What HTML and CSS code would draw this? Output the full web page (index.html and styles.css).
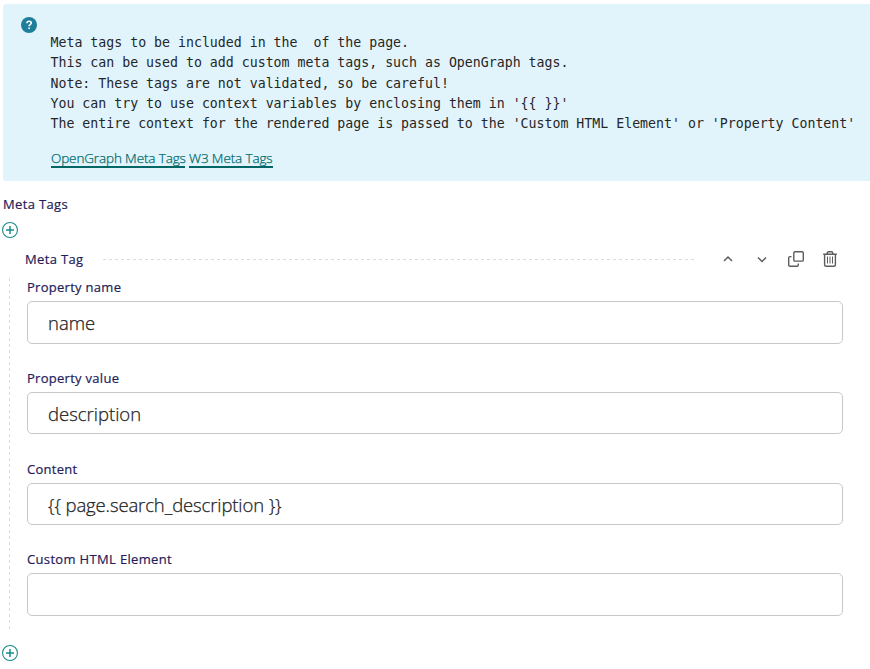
FILE: index.html
```html
<!DOCTYPE html>
<html lang="en">
<head>
<meta charset="utf-8">
<title>Meta Tags</title>
<link rel="stylesheet" href="styles.css">
</head>
<body>
<section class="help">
  <svg class="help-icon" width="16" height="16" viewBox="0 0 16 16"><circle cx="8" cy="8" r="8" fill="#1f7e9a"/><path d="M5.9 6.3C5.9 4.9 6.8 4.2 8.1 4.2S10.3 5 10.3 6.1C10.3 7.6 8.1 7.6 8.1 9.2M8.1 10.5V12" fill="none" stroke="#fff" stroke-width="1.6"/></svg>
  <div class="help-body">
    <pre class="help-text">Meta tags to be included in the  of the page.
This can be used to add custom meta tags, such as OpenGraph tags.
Note: These tags are not validated, so be careful!
You can try to use context variables by enclosing them in '{{ }}'
The entire context for the rendered page is passed to the 'Custom HTML Element' or 'Property Content'</pre>
    <div class="links"><a class="link link-og">OpenGraph Meta Tags</a><a class="link link-w3">W3 Meta Tags</a></div>
  </div>
</section>
<main class="panel">
  <h2 class="title">Meta Tags</h2>
  <svg class="add" width="16" height="16" viewBox="0 0 16 16"><circle cx="8" cy="8" r="7.45"/><path d="M8 4v8M4 8h8"/></svg>
  <header class="block-head">
    <h3 class="block-title">Meta Tag</h3>
    <span class="rule"></span>
    <div class="actions">
      <svg width="16" height="16" viewBox="0 0 16 16"><path d="M4 10l4-4 4 4" stroke-width="1.5"/></svg>
      <svg width="16" height="16" viewBox="0 0 16 16"><path d="M4 6.5l4 4 4-4" stroke-width="1.5"/></svg>
      <svg width="16" height="16" viewBox="0 0 16 16"><rect x="5.8" y=".8" width="9.5" height="9.3" rx="1.2"/><path d="M3.5 5.6H2A1.3 1.3 0 0 0 .7 6.9V14A1.3 1.3 0 0 0 2 15.3H9A1.3 1.3 0 0 0 10.3 14V12.5"/></svg>
      <svg width="16" height="16" viewBox="0 0 16 16"><path d="M1.2 3.3H14.8M5.2 3V2.2Q5.2 .8 6.6 .8H9.4Q10.8 .8 10.8 2.2V3M2.6 3.5V13.8Q2.6 15.3 4.1 15.3H11.9Q13.4 15.3 13.4 13.8V3.5"/><path d="M5.5 5.5v7M8 5.5v7M10.5 5.5v7" stroke-width="1"/></svg>
    </div>
  </header>
  <div class="fields">
    <div class="field"><label class="label">Property name</label><div class="input">name</div></div>
    <div class="field"><label class="label">Property value</label><div class="input">description</div></div>
    <div class="field"><label class="label">Content</label><div class="input input-page">{{ page.search_description }}</div></div>
    <div class="field"><label class="label label-custom">Custom HTML Element</label><div class="input"></div></div>
  </div>
  <svg class="add add-end" width="16" height="16" viewBox="0 0 16 16"><circle cx="8" cy="8" r="7.45"/><path d="M8 4v8M4 8h8"/></svg>
</main>
</body>
</html>
```
FILE: styles.css
```css
* { box-sizing: border-box; }
body { margin: 0; background: #fff; overflow: hidden; font-family: "Open Sans", "Noto Sans", sans-serif; }
svg { display: block; }
.help { display: flex; gap: 14px; height: 177px; margin: 4px 0 0 3px; padding: 13px 0 0 18px; background: #e1f4fc; border-radius: 3px 0 0 3px; }
.help-icon { flex: none; }
.help-body { padding-top: 16px; }
.help-text { margin: 0 0 0 -.5px; font: 13.24px/20.25px "DejaVu Sans Mono", monospace; color: #262626; }
.links { display: flex; gap: 4px; margin: 15px 0 0 0; }
.link { height: 19px; font-size: 13.5px; font-weight: 300; line-height: 18px; letter-spacing: -.13px; white-space: nowrap; color: #006b6b; border-bottom: 2px solid #006666; -webkit-text-stroke: .25px #006b6b; }
.link-og { width: 134px; }
.link-w3 { width: 84px; }
.panel { padding: 14px 27px 0 2px; }
.title, .block-title { margin: 0; font-size: 13px; font-weight: 500; line-height: 20px; letter-spacing: .35px; color: #261c5a; white-space: nowrap; -webkit-text-stroke: .2px #261c5a; }
.title { padding-left: 1px; line-height: 18px; margin-bottom: 9px; }
.add { margin-top: 7px; fill: none; stroke: #1b8a86; stroke-width: 1.1; }
.add path { stroke-width: 1.5; }
.block-head { display: flex; align-items: center; height: 20px; margin-top: 11px; padding-left: 23px; }
.block-title { width: 78px; }
.rule { flex: 1; height: 1px; background: repeating-linear-gradient(90deg, #dcdcdc 0 3px, transparent 3px 6px); }
.actions { display: flex; gap: 18px; margin: 0 5px 0 26px; fill: none; stroke: #5c5c5c; stroke-width: 1.4; }
.fields { display: flex; flex-direction: column; height: 352px; margin: 9px 0 0 7px; padding-left: 18px; background: repeating-linear-gradient(180deg, #dcdcdc 0 3px, transparent 3px 6px) 0 0 / 1px 100% no-repeat; }
.field { height: 90.8px; flex: none; }
.label { display: block; height: 23px; font-size: 13px; font-weight: 500; line-height: 18px; letter-spacing: .28px; color: #261c5a; white-space: nowrap; -webkit-text-stroke: .2px #261c5a; }
.label-custom { letter-spacing: .34px; }
.input { display: flex; align-items: center; width: 816px; height: 42.6px; padding: 1px 20px 0; border: 1px solid #c8c8c8; border-radius: 5px; font-size: 18.5px; font-weight: 300; color: #222; white-space: nowrap; -webkit-text-stroke: .25px #222; }
.input-page { letter-spacing: -.12px; }
.add-end { margin-top: 15px; }
```
